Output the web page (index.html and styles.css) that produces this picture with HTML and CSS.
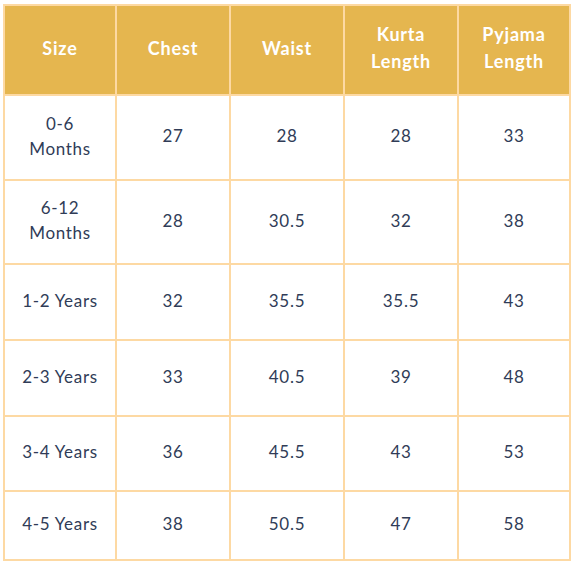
FILE: index.html
```html
<!DOCTYPE html>
<html lang="en">
<head>
<meta charset="utf-8">
<title>Size Chart</title>
<link rel="stylesheet" href="styles.css">
</head>
<body>
<div class="chart" role="table">
  <div class="cell head" role="columnheader">Size</div>
  <div class="cell head" role="columnheader">Chest</div>
  <div class="cell head" role="columnheader">Waist</div>
  <div class="cell head" role="columnheader">Kurta<br>Length</div>
  <div class="cell head" role="columnheader">Pyjama<br>Length</div>

  <div class="cell">0-6<br>Months</div>
  <div class="cell">27</div>
  <div class="cell">28</div>
  <div class="cell">28</div>
  <div class="cell">33</div>

  <div class="cell">6-12<br>Months</div>
  <div class="cell">28</div>
  <div class="cell">30.5</div>
  <div class="cell">32</div>
  <div class="cell">38</div>

  <div class="cell">1-2 Years</div>
  <div class="cell">32</div>
  <div class="cell">35.5</div>
  <div class="cell">35.5</div>
  <div class="cell">43</div>

  <div class="cell">2-3 Years</div>
  <div class="cell">33</div>
  <div class="cell">40.5</div>
  <div class="cell">39</div>
  <div class="cell">48</div>

  <div class="cell">3-4 Years</div>
  <div class="cell">36</div>
  <div class="cell">45.5</div>
  <div class="cell">43</div>
  <div class="cell">53</div>

  <div class="cell">4-5 Years</div>
  <div class="cell">38</div>
  <div class="cell">50.5</div>
  <div class="cell">47</div>
  <div class="cell">58</div>
</div>
</body>
</html>
```
FILE: styles.css
```css
html, body {
  margin: 0;
  padding: 0;
  background: #ffffff;
}
body {
  padding: 4px 0 0 3px;
  font-family: "Lato", "Open Sans", sans-serif;
}
.chart {
  display: grid;
  grid-template-columns: 110px 112px 112px 112px 110px;
  grid-template-rows: 88px 83px 82px 74px 74px 73px 67px;
  gap: 2px;
  padding: 2px;
  width: max-content;
  background: #fdd9a3;
}
.cell {
  background: #ffffff;
  display: flex;
  align-items: center;
  justify-content: center;
  text-align: center;
  padding-bottom: 4px;
  color: #303c57;
  font-size: 17px;
  line-height: 25px;
  letter-spacing: 0.7px;
}
.cell.head {
  background: #e5b64f;
  color: #ffffff;
  font-weight: 700;
  font-size: 18px;
  line-height: 27px;
  letter-spacing: 0.8px;
}
```
